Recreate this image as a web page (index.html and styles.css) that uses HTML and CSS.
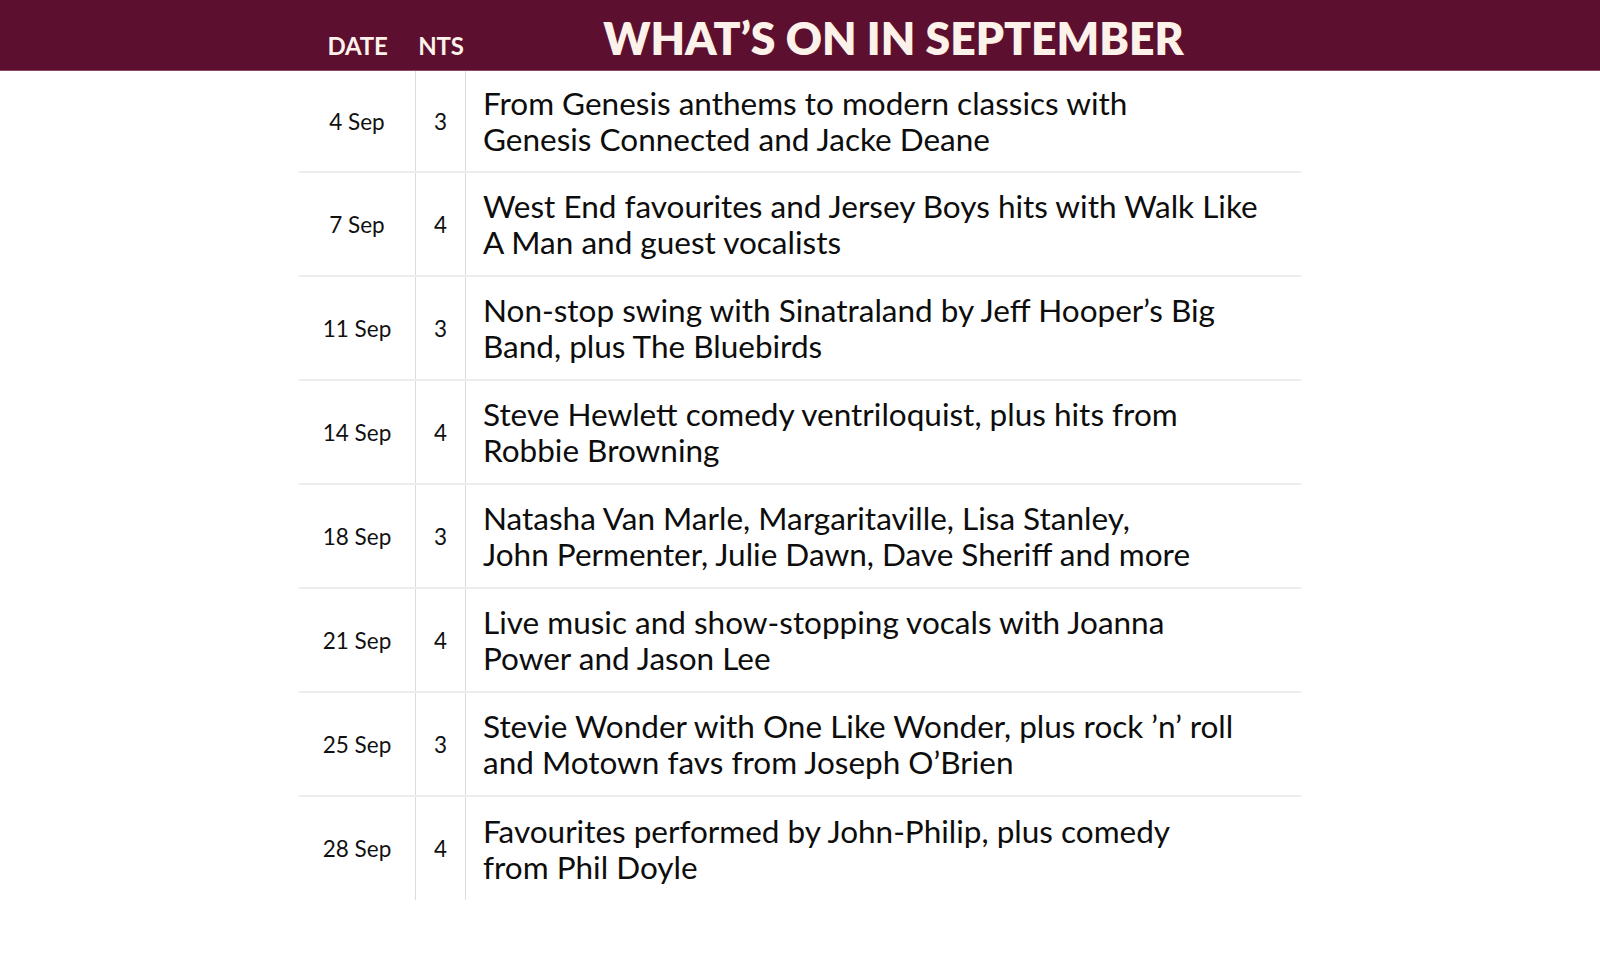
FILE: index.html
```html
<!DOCTYPE html>
<html>
<head>
<meta charset="utf-8">
<link rel="stylesheet" href="styles.css">
</head>
<body>
<header class="bar">
  <div class="bar-inner">
    <div class="h-date">DATE</div>
    <div class="h-nts">NTS</div>
    <div class="h-title">WHAT’S ON IN SEPTEMBER</div>
  </div>
</header>
<main class="table">
  <div class="row"><div class="c-date">4 Sep</div><div class="c-nts">3</div><div class="c-desc">From Genesis anthems to modern classics with<br>Genesis Connected and Jacke Deane</div></div>
  <div class="row"><div class="c-date">7 Sep</div><div class="c-nts">4</div><div class="c-desc">West End favourites and Jersey Boys hits with Walk Like<br>A Man and guest vocalists</div></div>
  <div class="row"><div class="c-date">11 Sep</div><div class="c-nts">3</div><div class="c-desc">Non-stop swing with Sinatraland by Jeff Hooper’s Big<br>Band, plus The Bluebirds</div></div>
  <div class="row"><div class="c-date">14 Sep</div><div class="c-nts">4</div><div class="c-desc">Steve Hewlett comedy ventriloquist, plus hits from<br>Robbie Browning</div></div>
  <div class="row"><div class="c-date">18 Sep</div><div class="c-nts">3</div><div class="c-desc">Natasha Van Marle, Margaritaville, Lisa Stanley,<br>John Permenter, Julie Dawn, Dave Sheriff and more</div></div>
  <div class="row"><div class="c-date">21 Sep</div><div class="c-nts">4</div><div class="c-desc">Live music and show-stopping vocals with Joanna<br>Power and Jason Lee</div></div>
  <div class="row"><div class="c-date">25 Sep</div><div class="c-nts">3</div><div class="c-desc">Stevie Wonder with One Like Wonder, plus rock ’n’ roll<br>and Motown favs from Joseph O’Brien</div></div>
  <div class="row last"><div class="c-date">28 Sep</div><div class="c-nts">4</div><div class="c-desc">Favourites performed by John-Philip, plus comedy<br>from Phil Doyle</div></div>
</main>
</body>
</html>
```

FILE: styles.css
```css
* { box-sizing: border-box; }
html, body { margin: 0; padding: 0; background: #fff; }
body { width: 1600px; height: 967px; overflow: hidden; font-family: Lato, "Open Sans", sans-serif; color: #111; }

.bar {
  height: 71px;
  background: #5c0f2f;
  border-bottom: 1px solid #8a4a63;
}
.bar-inner {
  display: flex;
  align-items: baseline;
  padding-left: 299px;
  padding-top: 11px;
  color: #fdf2ea;
  font-weight: 700;
}
.h-date { width: 117px; text-align: center; font-size: 24px; letter-spacing: -0.2px; }
.h-nts { width: 50px; text-align: center; font-size: 24px; letter-spacing: -0.2px; }
.h-title { width: 835px; text-align: center; font-size: 44.5px; font-weight: 800; padding-left: 20px; }

.table {
  margin-left: 299px;
  width: 1002px;
}
.row {
  display: grid;
  grid-template-columns: 117px 50px 1fr;
  height: 104px;
  border-bottom: 2px solid #ececec;
}
.row:first-child { height: 102px; }
.row.last { border-bottom: none; height: 103px; }
.c-date, .c-nts {
  display: flex;
  align-items: center;
  justify-content: center;
  font-size: 22.5px;
  border-right: 1px solid #dcdcdc;
}
.c-desc {
  display: flex;
  flex-direction: column;
  justify-content: center;
  padding-left: 17px;
  font-size: 31.5px;
  line-height: 36px;
  color: #0d0d0d;
}
```
